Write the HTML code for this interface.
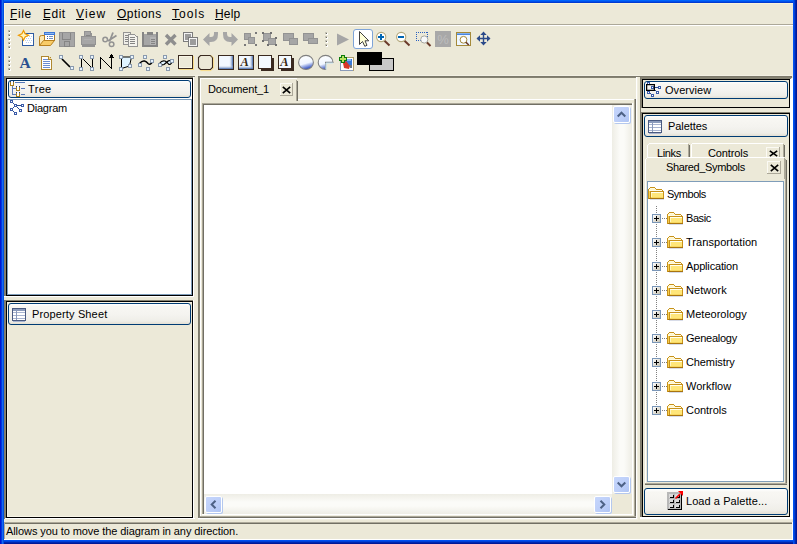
<!DOCTYPE html>
<html><head><meta charset="utf-8"><style>
html,body{margin:0;padding:0;}
body{width:797px;height:544px;position:relative;overflow:hidden;background:#ECE9D8;}
div,span,svg{position:absolute;}
.t{font-family:"Liberation Sans",sans-serif;font-size:11px;line-height:13px;white-space:nowrap;}
</style></head><body>
<div style="left:0px;top:0px;width:797px;height:544px;background:#ECE9D8;"></div>
<div style="left:0px;top:0px;width:797px;height:1px;background:#0064FC;"></div>
<div style="left:0px;top:1px;width:797px;height:1px;background:#0050EA;"></div>
<div style="left:0px;top:2px;width:797px;height:1px;background:#003AD2;"></div>
<div style="left:0px;top:0px;width:1px;height:544px;background:#0016D0;"></div>
<div style="left:1px;top:0px;width:1px;height:544px;background:#0038E0;"></div>
<div style="left:2px;top:0px;width:1px;height:544px;background:#1668F0;"></div>
<div style="left:3px;top:0px;width:1px;height:544px;background:#0050E0;"></div>
<div style="left:793px;top:0px;width:1px;height:544px;background:#0050F0;"></div>
<div style="left:794px;top:0px;width:1px;height:544px;background:#0040D8;"></div>
<div style="left:795px;top:0px;width:1px;height:544px;background:#0028B0;"></div>
<div style="left:796px;top:0px;width:1px;height:544px;background:#001898;"></div>
<div style="left:4px;top:540px;width:789px;height:1px;background:#0050F0;"></div>
<div style="left:4px;top:541px;width:789px;height:1px;background:#0040D8;"></div>
<div style="left:4px;top:542px;width:789px;height:1px;background:#0028B0;"></div>
<div style="left:4px;top:543px;width:789px;height:1px;background:#001898;"></div>
<div style="left:4px;top:3px;width:789px;height:1px;background:#FAF3DC;"></div>
<div style="left:4px;top:3px;width:1px;height:73px;background:#FAF3DC;"></div>
<span class="t" style="left:10px;top:7px;font-size:12px;line-height:14px;letter-spacing:0.619px;color:#000">File</span>
<div style="left:10px;top:19px;width:7px;height:1px;background:#000;"></div>
<span class="t" style="left:43px;top:7px;font-size:12px;line-height:14px;letter-spacing:0.504px;color:#000">Edit</span>
<div style="left:43px;top:19px;width:7px;height:1px;background:#000;"></div>
<span class="t" style="left:76px;top:7px;font-size:12px;line-height:14px;letter-spacing:1.134px;color:#000">View</span>
<div style="left:76px;top:19px;width:8px;height:1px;background:#000;"></div>
<span class="t" style="left:117px;top:7px;font-size:12px;line-height:14px;letter-spacing:0.473px;color:#000">Options</span>
<div style="left:117px;top:19px;width:10px;height:1px;background:#000;"></div>
<span class="t" style="left:172px;top:7px;font-size:12px;line-height:14px;letter-spacing:1.046px;color:#000">Tools</span>
<div style="left:172px;top:19px;width:8px;height:1px;background:#000;"></div>
<span class="t" style="left:215px;top:7px;font-size:12px;line-height:14px;letter-spacing:0.171px;color:#000">Help</span>
<div style="left:215px;top:19px;width:8px;height:1px;background:#000;"></div>
<div style="left:4px;top:24px;width:789px;height:1px;background:#ACA899;"></div>
<div style="left:4px;top:25px;width:789px;height:1px;background:#FFFFFF;"></div>
<div style="left:8px;top:30px;width:2px;height:2px;background:#B8B6A8;"></div>
<div style="left:9px;top:31px;width:1px;height:1px;background:#6E6C62;"></div>
<div style="left:9px;top:32px;width:2px;height:1px;background:#FFFFFF;"></div>
<div style="left:10px;top:31px;width:1px;height:1px;background:#FFFFFF;"></div>
<div style="left:8px;top:34px;width:2px;height:2px;background:#B8B6A8;"></div>
<div style="left:9px;top:35px;width:1px;height:1px;background:#6E6C62;"></div>
<div style="left:9px;top:36px;width:2px;height:1px;background:#FFFFFF;"></div>
<div style="left:10px;top:35px;width:1px;height:1px;background:#FFFFFF;"></div>
<div style="left:8px;top:38px;width:2px;height:2px;background:#B8B6A8;"></div>
<div style="left:9px;top:39px;width:1px;height:1px;background:#6E6C62;"></div>
<div style="left:9px;top:40px;width:2px;height:1px;background:#FFFFFF;"></div>
<div style="left:10px;top:39px;width:1px;height:1px;background:#FFFFFF;"></div>
<div style="left:8px;top:42px;width:2px;height:2px;background:#B8B6A8;"></div>
<div style="left:9px;top:43px;width:1px;height:1px;background:#6E6C62;"></div>
<div style="left:9px;top:44px;width:2px;height:1px;background:#FFFFFF;"></div>
<div style="left:10px;top:43px;width:1px;height:1px;background:#FFFFFF;"></div>
<div style="left:8px;top:46px;width:2px;height:2px;background:#B8B6A8;"></div>
<div style="left:9px;top:47px;width:1px;height:1px;background:#6E6C62;"></div>
<div style="left:9px;top:48px;width:2px;height:1px;background:#FFFFFF;"></div>
<div style="left:10px;top:47px;width:1px;height:1px;background:#FFFFFF;"></div>
<div style="left:8px;top:56px;width:2px;height:2px;background:#B8B6A8;"></div>
<div style="left:9px;top:57px;width:1px;height:1px;background:#6E6C62;"></div>
<div style="left:9px;top:58px;width:2px;height:1px;background:#FFFFFF;"></div>
<div style="left:10px;top:57px;width:1px;height:1px;background:#FFFFFF;"></div>
<div style="left:8px;top:60px;width:2px;height:2px;background:#B8B6A8;"></div>
<div style="left:9px;top:61px;width:1px;height:1px;background:#6E6C62;"></div>
<div style="left:9px;top:62px;width:2px;height:1px;background:#FFFFFF;"></div>
<div style="left:10px;top:61px;width:1px;height:1px;background:#FFFFFF;"></div>
<div style="left:8px;top:64px;width:2px;height:2px;background:#B8B6A8;"></div>
<div style="left:9px;top:65px;width:1px;height:1px;background:#6E6C62;"></div>
<div style="left:9px;top:66px;width:2px;height:1px;background:#FFFFFF;"></div>
<div style="left:10px;top:65px;width:1px;height:1px;background:#FFFFFF;"></div>
<div style="left:8px;top:68px;width:2px;height:2px;background:#B8B6A8;"></div>
<div style="left:9px;top:69px;width:1px;height:1px;background:#6E6C62;"></div>
<div style="left:9px;top:70px;width:2px;height:1px;background:#FFFFFF;"></div>
<div style="left:10px;top:69px;width:1px;height:1px;background:#FFFFFF;"></div>
<div style="left:5px;top:75px;width:788px;height:1px;background:#F3F0E3;"></div>
<div style="left:4px;top:76px;width:191px;height:1px;background:#7D7A6C;"></div>
<div style="left:4px;top:76px;width:1px;height:220px;background:#7D7A6C;"></div>
<div style="left:4px;top:300px;width:1px;height:219px;background:#7D7A6C;"></div>
<div style="left:5px;top:77px;width:189px;height:1px;background:#858272;"></div>
<div style="left:5px;top:77px;width:1px;height:220px;background:#858272;"></div>
<div style="left:6px;top:78px;width:187px;height:1px;background:#000;"></div>
<div style="left:6px;top:295px;width:187px;height:1px;background:#000;"></div>
<div style="left:6px;top:78px;width:1px;height:218px;background:#000;"></div>
<div style="left:192px;top:78px;width:1px;height:218px;background:#000;"></div>
<div style="left:4px;top:296px;width:190px;height:1px;background:#FFFFFF;"></div>
<div style="left:193px;top:77px;width:1px;height:220px;background:#FFFFFF;"></div>
<div style="left:5px;top:300px;width:189px;height:1px;background:#858272;"></div>
<div style="left:5px;top:300px;width:1px;height:219px;background:#858272;"></div>
<div style="left:6px;top:301px;width:187px;height:1px;background:#000;"></div>
<div style="left:6px;top:517px;width:187px;height:1px;background:#000;"></div>
<div style="left:6px;top:301px;width:1px;height:217px;background:#000;"></div>
<div style="left:192px;top:301px;width:1px;height:217px;background:#000;"></div>
<div style="left:7px;top:302px;width:185px;height:1px;background:#F8F5E8;"></div>
<div style="left:7px;top:302px;width:1px;height:215px;background:#F8F5E8;"></div>
<div style="left:7px;top:516px;width:185px;height:1px;background:#F8F5E8;"></div>
<div style="left:5px;top:518px;width:190px;height:1px;background:#FFFFFF;"></div>
<div style="left:193px;top:300px;width:1px;height:219px;background:#FFFFFF;"></div>
<div style="left:7px;top:79px;width:185px;height:216px;background:#FFFFFF;"></div>
<div style="left:191px;top:99px;width:1px;height:196px;background:#7F9DB9;"></div>
<div style="left:7px;top:294px;width:185px;height:1px;background:#7F9DB9;"></div>
<div style="left:7px;top:99px;width:1px;height:196px;background:#7F9DB9;"></div>
<div style="left:7px;top:99px;width:185px;height:1px;background:#7F9DB9;"></div>
<div style="left:8px;top:80px;width:181px;height:16px;background:linear-gradient(#FFFFFF 0%,#F8F7F3 12%,#F4F3EF 55%,#EFEEE8 85%,#E4E0D4 100%);border:1px solid #003C74;border-radius:3px;"></div>
<span class="t" style="left:28px;top:83px;font-size:11px;line-height:13px;letter-spacing:0.327px;color:#000">Tree</span>
<span class="t" style="left:27px;top:102px;font-size:11px;line-height:13px;letter-spacing:-0.230px;color:#000">Diagram</span>
<div style="left:8px;top:303px;width:181px;height:20px;background:linear-gradient(#FFFFFF 0%,#F8F7F3 12%,#F4F3EF 55%,#EFEEE8 85%,#E4E0D4 100%);border:1px solid #003C74;border-radius:3px;"></div>
<span class="t" style="left:32px;top:308px;font-size:11px;line-height:13px;letter-spacing:0.140px;color:#000">Property Sheet</span>
<div style="left:198px;top:76px;width:594px;height:1px;background:#7D7A6C;"></div>
<div style="left:198px;top:76px;width:1px;height:443px;background:#7D7A6C;"></div>
<div style="left:199px;top:77px;width:438px;height:1px;background:#858272;"></div>
<div style="left:199px;top:77px;width:1px;height:442px;background:#858272;"></div>
<div style="left:198px;top:518px;width:440px;height:1px;background:#FFFFFF;"></div>
<div style="left:636px;top:77px;width:1px;height:442px;background:#FFFFFF;"></div>
<div style="left:198px;top:519px;width:440px;height:1px;background:#F1EFE2;"></div>
<div style="left:637px;top:77px;width:1px;height:443px;background:#F1EFE2;"></div>
<div style="left:200px;top:78px;width:1px;height:440px;background:#FFFFFF;"></div>
<div style="left:298px;top:99px;width:338px;height:1px;background:#FFFFFF;"></div>
<div style="left:634px;top:99px;width:1px;height:419px;background:#ACA899;"></div>
<div style="left:635px;top:99px;width:1px;height:419px;background:#716F64;"></div>
<div style="left:200px;top:516px;width:436px;height:1px;background:#ACA899;"></div>
<div style="left:200px;top:517px;width:436px;height:1px;background:#716F64;"></div>
<div style="left:200px;top:78px;width:97px;height:1px;background:#FFFFFF;"></div>
<div style="left:296px;top:80px;width:1px;height:21px;background:#ACA899;"></div>
<div style="left:297px;top:81px;width:1px;height:20px;background:#716F64;"></div>
<span class="t" style="left:208px;top:83px;font-size:11px;line-height:13px;letter-spacing:-0.131px;color:#000">Document_1</span>
<div style="left:280px;top:83px;width:13px;height:1px;background:#FBFAF4;"></div>
<div style="left:280px;top:83px;width:1px;height:13px;background:#FBFAF4;"></div>
<div style="left:280px;top:95px;width:13px;height:1px;background:#ACA899;"></div>
<div style="left:292px;top:83px;width:1px;height:13px;background:#ACA899;"></div>
<svg style="left:282px;top:86px" width="9" height="8" viewBox="0 0 9 8" ><path d="M0.8 0.8 L8.2 7.2 M8.2 0.8 L0.8 7.2" stroke="#000" stroke-width="1.6"/></svg>
<div style="left:202px;top:103px;width:432px;height:1px;background:#ACA899;"></div>
<div style="left:202px;top:103px;width:1px;height:413px;background:#ACA899;"></div>
<div style="left:203px;top:104px;width:431px;height:1px;background:#716F64;"></div>
<div style="left:203px;top:104px;width:1px;height:412px;background:#716F64;"></div>
<div style="left:202px;top:514px;width:432px;height:1px;background:#FFFFFF;"></div>
<div style="left:632px;top:103px;width:1px;height:412px;background:#FFFFFF;"></div>
<div style="left:202px;top:515px;width:432px;height:1px;background:#F1EFE2;"></div>
<div style="left:633px;top:103px;width:1px;height:413px;background:#F1EFE2;"></div>
<div style="left:204px;top:105px;width:428px;height:409px;background:#FFFFFF;"></div>
<div style="left:612px;top:105px;width:20px;height:389px;background:linear-gradient(90deg,#EEEDE5,#FBFBF8 40%,#FBFBF8 60%,#EEEDE5);"></div>
<div style="left:204px;top:494px;width:408px;height:20px;background:linear-gradient(180deg,#EEEDE5,#FBFBF8 40%,#FBFBF8 60%,#EEEDE5);"></div>
<div style="left:612px;top:494px;width:20px;height:20px;background:#ECE9D8;"></div>
<div style="left:613px;top:106px;width:15px;height:15px;background:linear-gradient(135deg,#C6D6FC 0%,#BCCEF8 60%,#AFC4F4 100%);border:1px solid #FFFFFF;border-radius:2px;box-shadow:1px 1px 0 #B4C8EE;"></div>
<svg style="left:0;top:0" width="797" height="544"><path d="M617.7 116.5 L621.5 112.7 L625.3 116.5" fill="none" stroke="#4D6185" stroke-width="2" stroke-linecap="butt" stroke-linejoin="miter"/></svg>
<div style="left:613px;top:476px;width:15px;height:15px;background:linear-gradient(135deg,#C6D6FC 0%,#BCCEF8 60%,#AFC4F4 100%);border:1px solid #FFFFFF;border-radius:2px;box-shadow:1px 1px 0 #B4C8EE;"></div>
<svg style="left:0;top:0" width="797" height="544"><path d="M617.7 482.5 L621.5 486.3 L625.3 482.5" fill="none" stroke="#4D6185" stroke-width="2" stroke-linecap="butt" stroke-linejoin="miter"/></svg>
<div style="left:205px;top:496px;width:15px;height:15px;background:linear-gradient(135deg,#C6D6FC 0%,#BCCEF8 60%,#AFC4F4 100%);border:1px solid #FFFFFF;border-radius:2px;box-shadow:1px 1px 0 #B4C8EE;"></div>
<svg style="left:0;top:0" width="797" height="544"><path d="M215.5 500.7 L211.7 504.5 L215.5 508.3" fill="none" stroke="#4D6185" stroke-width="2" stroke-linecap="butt" stroke-linejoin="miter"/></svg>
<div style="left:594px;top:496px;width:15px;height:15px;background:linear-gradient(135deg,#C6D6FC 0%,#BCCEF8 60%,#AFC4F4 100%);border:1px solid #FFFFFF;border-radius:2px;box-shadow:1px 1px 0 #B4C8EE;"></div>
<svg style="left:0;top:0" width="797" height="544"><path d="M600.5 500.7 L604.3 504.5 L600.5 508.3" fill="none" stroke="#4D6185" stroke-width="2" stroke-linecap="butt" stroke-linejoin="miter"/></svg>
<div style="left:640px;top:76px;width:1px;height:443px;background:#7D7A6C;"></div>
<div style="left:641px;top:77px;width:151px;height:1px;background:#858272;"></div>
<div style="left:641px;top:78px;width:150px;height:1px;background:#858272;"></div>
<div style="left:641px;top:77px;width:1px;height:31px;background:#858272;"></div>
<div style="left:642px;top:79px;width:148px;height:1px;background:#000;"></div>
<div style="left:642px;top:107px;width:148px;height:1px;background:#000;"></div>
<div style="left:642px;top:79px;width:1px;height:29px;background:#000;"></div>
<div style="left:789px;top:79px;width:1px;height:29px;background:#000;"></div>
<div style="left:790px;top:79px;width:3px;height:1px;background:#FFFFFF;"></div>
<div style="left:644px;top:81px;width:142px;height:16px;background:linear-gradient(#FFFFFF 0%,#F8F7F3 12%,#F4F3EF 55%,#EFEEE8 85%,#E4E0D4 100%);border:1px solid #003C74;border-radius:3px;"></div>
<span class="t" style="left:665px;top:84px;font-size:11px;line-height:13px;letter-spacing:0.051px;color:#000">Overview</span>
<div style="left:641px;top:112px;width:150px;height:1px;background:#858272;"></div>
<div style="left:641px;top:112px;width:1px;height:407px;background:#858272;"></div>
<div style="left:642px;top:113px;width:148px;height:1px;background:#000;"></div>
<div style="left:642px;top:516px;width:148px;height:1px;background:#000;"></div>
<div style="left:642px;top:113px;width:1px;height:404px;background:#000;"></div>
<div style="left:789px;top:113px;width:1px;height:404px;background:#000;"></div>
<div style="left:640px;top:518px;width:153px;height:1px;background:#FFFFFF;"></div>
<div style="left:791px;top:79px;width:1px;height:440px;background:#FFFFFF;"></div>
<div style="left:790px;top:79px;width:1px;height:440px;background:#FFFFFF;"></div>
<div style="left:792px;top:78px;width:1px;height:441px;background:#FFFFFF;"></div>
<div style="left:640px;top:517px;width:153px;height:1px;background:#FFFFFF;"></div>
<div style="left:640px;top:519px;width:153px;height:1px;background:#F1EFE2;"></div>
<div style="left:644px;top:115px;width:142px;height:20px;background:linear-gradient(#FFFFFF 0%,#F8F7F3 12%,#F4F3EF 55%,#EFEEE8 85%,#E4E0D4 100%);border:1px solid #003C74;border-radius:3px;"></div>
<span class="t" style="left:668px;top:120px;font-size:11px;line-height:13px;letter-spacing:-0.079px;color:#000">Palettes</span>
<div style="left:647px;top:143px;width:42px;height:14px;background:#ECE9D8;"></div>
<div style="left:649px;top:143px;width:39px;height:1px;background:#FFFFFF;"></div>
<div style="left:647px;top:145px;width:1px;height:12px;background:#FFFFFF;"></div>
<div style="left:648px;top:144px;width:1px;height:1px;background:#FFFFFF;"></div>
<div style="left:688px;top:144px;width:1px;height:13px;background:#ACA899;"></div>
<div style="left:689px;top:145px;width:1px;height:12px;background:#716F64;"></div>
<div style="left:692px;top:143px;width:91px;height:1px;background:#FFFFFF;"></div>
<div style="left:691px;top:144px;width:1px;height:13px;background:#FFFFFF;"></div>
<div style="left:783px;top:144px;width:1px;height:13px;background:#ACA899;"></div>
<div style="left:784px;top:145px;width:1px;height:12px;background:#716F64;"></div>
<span class="t" style="left:657px;top:147px;font-size:11px;line-height:13px;letter-spacing:-0.372px;color:#000">Links</span>
<span class="t" style="left:708px;top:147px;font-size:11px;line-height:13px;letter-spacing:-0.110px;color:#000">Controls</span>
<div style="left:766px;top:147px;width:14px;height:1px;background:#FBFAF4;"></div>
<div style="left:766px;top:147px;width:1px;height:10px;background:#FBFAF4;"></div>
<div style="left:779px;top:147px;width:1px;height:10px;background:#ACA899;"></div>
<svg style="left:769px;top:150px" width="9" height="7" viewBox="0 0 9 7" ><path d="M0.8 0.8 L8.2 6.2 M8.2 0.8 L0.8 6.2" stroke="#000" stroke-width="1.6"/></svg>
<div style="left:647px;top:157px;width:137px;height:1px;background:#FFFFFF;"></div>
<div style="left:645px;top:159px;width:1px;height:326px;background:#FFFFFF;"></div>
<div style="left:646px;top:158px;width:1px;height:1px;background:#FFFFFF;"></div>
<div style="left:784px;top:158px;width:1px;height:21px;background:#ACA899;"></div>
<div style="left:785px;top:159px;width:1px;height:324px;background:#ACA899;"></div>
<div style="left:786px;top:160px;width:1px;height:325px;background:#716F64;"></div>
<div style="left:645px;top:483px;width:142px;height:1px;background:#ACA899;"></div>
<div style="left:645px;top:484px;width:142px;height:1px;background:#716F64;"></div>
<span class="t" style="left:666px;top:161px;font-size:11px;line-height:13px;letter-spacing:-0.352px;color:#000">Shared_Symbols</span>
<div style="left:767px;top:161px;width:14px;height:1px;background:#FBFAF4;"></div>
<div style="left:767px;top:161px;width:1px;height:13px;background:#FBFAF4;"></div>
<div style="left:767px;top:173px;width:14px;height:1px;background:#ACA899;"></div>
<div style="left:780px;top:161px;width:1px;height:13px;background:#ACA899;"></div>
<svg style="left:770px;top:164px" width="9" height="8" viewBox="0 0 9 8" ><path d="M0.8 0.8 L8.2 7.2 M8.2 0.8 L0.8 7.2" stroke="#000" stroke-width="1.6"/></svg>
<div style="left:647px;top:181px;width:137px;height:301px;background:#FFFFFF;box-sizing:border-box;border:1px solid #7F9DB9;"></div>
<span class="t" style="left:667px;top:188px;font-size:11px;line-height:13px;letter-spacing:-0.498px;color:#000">Symbols</span>
<span class="t" style="left:686px;top:212px;font-size:11px;line-height:13px;letter-spacing:-0.427px;color:#000">Basic</span>
<span class="t" style="left:686px;top:236px;font-size:11px;line-height:13px;letter-spacing:0.051px;color:#000">Transportation</span>
<span class="t" style="left:686px;top:260px;font-size:11px;line-height:13px;letter-spacing:-0.163px;color:#000">Application</span>
<span class="t" style="left:686px;top:284px;font-size:11px;line-height:13px;letter-spacing:0.059px;color:#000">Network</span>
<span class="t" style="left:686px;top:308px;font-size:11px;line-height:13px;letter-spacing:0.015px;color:#000">Meteorology</span>
<span class="t" style="left:686px;top:332px;font-size:11px;line-height:13px;letter-spacing:-0.252px;color:#000">Genealogy</span>
<span class="t" style="left:686px;top:356px;font-size:11px;line-height:13px;letter-spacing:-0.102px;color:#000">Chemistry</span>
<span class="t" style="left:686px;top:380px;font-size:11px;line-height:13px;letter-spacing:0.024px;color:#000">Workflow</span>
<span class="t" style="left:686px;top:404px;font-size:11px;line-height:13px;letter-spacing:-0.038px;color:#000">Controls</span>
<div style="left:644px;top:488px;width:142px;height:25px;background:linear-gradient(#FFFFFF 0%,#F8F7F3 12%,#F4F3EF 55%,#EFEEE8 85%,#E4E0D4 100%);border:1px solid #003C74;border-radius:3px;"></div>
<span class="t" style="left:686px;top:495px;font-size:11px;line-height:13px;letter-spacing:0.067px;color:#000">Load a Palette...</span>
<div style="left:4px;top:522px;width:789px;height:1px;background:#ACA899;"></div>
<div style="left:4px;top:522px;width:1px;height:18px;background:#ACA899;"></div>
<div style="left:5px;top:523px;width:787px;height:1px;background:#716F64;"></div>
<span class="t" style="left:6px;top:525px;font-size:11px;line-height:13px;letter-spacing:-0.081px;color:#000">Allows you to move the diagram in any direction.</span>
<div style="left:4px;top:539px;width:789px;height:1px;background:#FFFFFF;"></div>
<div style="left:792px;top:522px;width:1px;height:18px;background:#FFFFFF;"></div>
<svg style="left:0;top:0" width="797" height="544" viewBox="0 0 797 544"><g shape-rendering="crispEdges"><rect x="22" y="33" width="12" height="1" fill="#2D5BA3"/><rect x="22" y="45" width="12" height="1" fill="#2D5BA3"/><rect x="22" y="33" width="1" height="13" fill="#2D5BA3"/><rect x="33" y="33" width="1" height="13" fill="#2D5BA3"/><rect x="23" y="34" width="10" height="11" fill="#FFFFFF"/><rect x="25" y="36" width="1" height="1" fill="#B8D0F0"/><rect x="27" y="36" width="1" height="1" fill="#B8D0F0"/><rect x="29" y="36" width="1" height="1" fill="#B8D0F0"/><rect x="31" y="36" width="1" height="1" fill="#B8D0F0"/><rect x="26" y="38" width="1" height="1" fill="#B8D0F0"/><rect x="28" y="38" width="1" height="1" fill="#B8D0F0"/><rect x="30" y="38" width="1" height="1" fill="#B8D0F0"/><rect x="25" y="40" width="1" height="1" fill="#B8D0F0"/><rect x="27" y="40" width="1" height="1" fill="#B8D0F0"/><rect x="29" y="40" width="1" height="1" fill="#B8D0F0"/><rect x="31" y="40" width="1" height="1" fill="#B8D0F0"/><rect x="26" y="42" width="1" height="1" fill="#B8D0F0"/><rect x="28" y="42" width="1" height="1" fill="#B8D0F0"/><rect x="30" y="42" width="1" height="1" fill="#B8D0F0"/><rect x="44" y="32" width="11" height="1" fill="#A77A2B"/><rect x="44" y="40" width="11" height="1" fill="#A77A2B"/><rect x="44" y="32" width="1" height="9" fill="#A77A2B"/><rect x="54" y="32" width="1" height="9" fill="#A77A2B"/><rect x="45" y="33" width="9" height="7" fill="#FFFFFF"/><rect x="44" y="32" width="11" height="3" fill="#3C78D8"/><rect x="45" y="33" width="9" height="1" fill="#8CB8F0"/><rect x="47" y="36" width="1" height="1" fill="#4060A0"/><rect x="49" y="36" width="4" height="1" fill="#7090C0"/><rect x="47" y="38" width="1" height="1" fill="#4060A0"/><rect x="49" y="38" width="4" height="1" fill="#7090C0"/></g><path d="M39.5 37.5 Q39.5 35.5 41.5 35.5 L44.5 35.5 L44.5 45.5 L39.5 45.5 Z" fill="#FCE7B0" stroke="#B8801E" stroke-width="1" /><path d="M43.5 40.5 L54.5 40.5 L50.5 45.5 L39.5 45.5 Z" fill="#F8CC68" stroke="#B8801E" stroke-width="1" /><path d="M23.5 30.5 L25.1 33.7 L28.5 35.3 L25.1 36.9 L23.5 40.2 L21.9 36.9 L18.5 35.3 L21.9 33.7 Z" fill="#FFF6C0" stroke="#F09A00" stroke-width="1.2" /><g shape-rendering="crispEdges"><rect x="59" y="32" width="16" height="15" fill="#A6A6A6"/><rect x="59" y="32" width="16" height="1" fill="#939393"/><rect x="59" y="46" width="16" height="1" fill="#939393"/><rect x="59" y="32" width="1" height="15" fill="#939393"/><rect x="74" y="32" width="1" height="15" fill="#939393"/><rect x="62" y="33" width="1" height="7" fill="#858585"/><rect x="70" y="33" width="1" height="7" fill="#858585"/><rect x="62" y="39" width="9" height="1" fill="#858585"/><rect x="64" y="41" width="6" height="1" fill="#858585"/><rect x="64" y="46" width="6" height="1" fill="#858585"/><rect x="64" y="41" width="1" height="6" fill="#858585"/><rect x="69" y="41" width="1" height="6" fill="#858585"/><rect x="84" y="31" width="7" height="9" fill="#A6A6A6"/><rect x="84" y="31" width="7" height="1" fill="#939393"/><rect x="84" y="39" width="7" height="1" fill="#939393"/><rect x="84" y="31" width="1" height="9" fill="#939393"/><rect x="90" y="31" width="1" height="9" fill="#939393"/><rect x="91" y="33" width="1" height="6" fill="#939393"/><rect x="86" y="35" width="4" height="1" fill="#858585"/><rect x="86" y="37" width="4" height="1" fill="#858585"/><rect x="81" y="36" width="15" height="9" fill="#A6A6A6"/><rect x="81" y="36" width="15" height="1" fill="#939393"/><rect x="81" y="44" width="15" height="1" fill="#939393"/><rect x="81" y="36" width="1" height="9" fill="#939393"/><rect x="95" y="36" width="1" height="9" fill="#939393"/><rect x="84" y="39" width="8" height="1" fill="#B0B0B0"/><rect x="82" y="44" width="13" height="3" fill="#939393"/></g><path d="M113 32.5 L109.5 41.5 M116.5 35.5 L108 41" fill="none" stroke="#939393" stroke-width="1.8" /><circle cx="105.2" cy="39.5" r="2.3" fill="none" stroke="#939393" stroke-width="1.5"/><circle cx="111.6" cy="44.3" r="2.3" fill="none" stroke="#939393" stroke-width="1.5"/><g shape-rendering="crispEdges"><rect x="123" y="32" width="8" height="13" fill="#EFEEE8"/><rect x="123" y="32" width="8" height="1" fill="#939393"/><rect x="123" y="44" width="8" height="1" fill="#939393"/><rect x="123" y="32" width="1" height="13" fill="#939393"/><rect x="130" y="32" width="1" height="13" fill="#939393"/><rect x="125" y="35" width="4" height="1" fill="#858585"/><rect x="125" y="37" width="4" height="1" fill="#858585"/><rect x="125" y="39" width="4" height="1" fill="#858585"/><rect x="125" y="41" width="4" height="1" fill="#858585"/><rect x="128" y="34" width="10" height="13" fill="#F4F3EE"/><rect x="128" y="34" width="10" height="1" fill="#939393"/><rect x="128" y="46" width="10" height="1" fill="#939393"/><rect x="128" y="34" width="1" height="13" fill="#939393"/><rect x="137" y="34" width="1" height="13" fill="#939393"/><rect x="135" y="34" width="3" height="2" fill="#ECE9D8"/><rect x="135" y="35" width="1" height="1" fill="#939393"/><rect x="136" y="36" width="1" height="1" fill="#939393"/><rect x="130" y="37" width="5" height="1" fill="#858585"/><rect x="130" y="39" width="5" height="1" fill="#858585"/><rect x="130" y="41" width="5" height="1" fill="#858585"/><rect x="130" y="43" width="5" height="1" fill="#858585"/><rect x="142" y="32" width="2" height="15" fill="#858585"/><rect x="156" y="32" width="2" height="15" fill="#858585"/><rect x="142" y="45" width="16" height="2" fill="#858585"/><rect x="144" y="34" width="12" height="11" fill="#A6A6A6"/><rect x="147" y="32" width="6" height="3" fill="#858585"/><rect x="150" y="37" width="6" height="8" fill="#B4B4B4"/><rect x="151" y="39" width="4" height="1" fill="#858585"/><rect x="151" y="41" width="4" height="1" fill="#858585"/><rect x="151" y="43" width="4" height="1" fill="#858585"/></g><path d="M166 35 L175.5 44.5 M175.5 35 L166 44.5" fill="none" stroke="#8E8E8E" stroke-width="3.4" /><g shape-rendering="crispEdges"><rect x="183" y="32" width="10" height="1" fill="#7C7C7C"/><rect x="183" y="41" width="10" height="1" fill="#7C7C7C"/><rect x="183" y="32" width="1" height="10" fill="#7C7C7C"/><rect x="192" y="32" width="1" height="10" fill="#7C7C7C"/><rect x="184" y="33" width="8" height="1" fill="#F4F4F4"/><rect x="184" y="40" width="8" height="1" fill="#F4F4F4"/><rect x="184" y="33" width="1" height="8" fill="#F4F4F4"/><rect x="191" y="33" width="1" height="8" fill="#F4F4F4"/><rect x="185" y="34" width="6" height="6" fill="#9C9C9C"/><rect x="188" y="37" width="10" height="10" fill="#ECE9D8"/><rect x="188" y="37" width="10" height="1" fill="#7C7C7C"/><rect x="188" y="46" width="10" height="1" fill="#7C7C7C"/><rect x="188" y="37" width="1" height="10" fill="#7C7C7C"/><rect x="197" y="37" width="1" height="10" fill="#7C7C7C"/><rect x="189" y="38" width="8" height="1" fill="#F4F4F4"/><rect x="189" y="45" width="8" height="1" fill="#F4F4F4"/><rect x="189" y="38" width="1" height="8" fill="#F4F4F4"/><rect x="196" y="38" width="1" height="8" fill="#F4F4F4"/><rect x="190" y="39" width="6" height="6" fill="#9C9C9C"/></g><path d="M203 39.5 L209.5 33 L209.5 37 L211 37 Q214 37 214 33.5 L214 32 L218 32 L218 34 Q218 42 211 42 L209.5 42 L209.5 46 Z" fill="#A6A6A6"  /><path d="M238 39.5 L231.5 33 L231.5 37 L230 37 Q227 37 227 33.5 L227 32 L223 32 L223 34 Q223 42 230 42 L231.5 42 L231.5 46 Z" fill="#A6A6A6"  /><g shape-rendering="crispEdges"><rect x="244" y="33" width="7" height="7" fill="#A6A6A6"/><rect x="244" y="33" width="7" height="1" fill="#939393"/><rect x="244" y="39" width="7" height="1" fill="#939393"/><rect x="244" y="33" width="1" height="7" fill="#939393"/><rect x="250" y="33" width="1" height="7" fill="#939393"/><rect x="248" y="37" width="7" height="7" fill="#A6A6A6"/><rect x="248" y="37" width="7" height="1" fill="#939393"/><rect x="248" y="43" width="7" height="1" fill="#939393"/><rect x="248" y="37" width="1" height="7" fill="#939393"/><rect x="254" y="37" width="1" height="7" fill="#939393"/><rect x="255" y="32" width="2" height="2" fill="#7A7A7A"/><rect x="244" y="44" width="2" height="2" fill="#7A7A7A"/><rect x="255" y="44" width="2" height="2" fill="#7A7A7A"/><rect x="263" y="33" width="8" height="8" fill="#A6A6A6"/><rect x="263" y="33" width="8" height="1" fill="#939393"/><rect x="263" y="40" width="8" height="1" fill="#939393"/><rect x="263" y="33" width="1" height="8" fill="#939393"/><rect x="270" y="33" width="1" height="8" fill="#939393"/><rect x="268" y="38" width="8" height="7" fill="#A6A6A6"/><rect x="268" y="38" width="8" height="1" fill="#939393"/><rect x="268" y="44" width="8" height="1" fill="#939393"/><rect x="268" y="38" width="1" height="7" fill="#939393"/><rect x="275" y="38" width="1" height="7" fill="#939393"/><rect x="262" y="32" width="2" height="2" fill="#707070"/><rect x="270" y="32" width="2" height="2" fill="#707070"/><rect x="262" y="40" width="2" height="2" fill="#707070"/><rect x="275" y="37" width="2" height="2" fill="#707070"/><rect x="267" y="44" width="2" height="2" fill="#707070"/><rect x="275" y="44" width="2" height="2" fill="#707070"/><rect x="283" y="33" width="11" height="8" fill="#A6A6A6"/><rect x="283" y="33" width="11" height="1" fill="#939393"/><rect x="283" y="40" width="11" height="1" fill="#939393"/><rect x="283" y="33" width="1" height="8" fill="#939393"/><rect x="293" y="33" width="1" height="8" fill="#939393"/><rect x="289" y="38" width="9" height="7" fill="#A6A6A6"/><rect x="289" y="38" width="9" height="1" fill="#939393"/><rect x="289" y="44" width="9" height="1" fill="#939393"/><rect x="289" y="38" width="1" height="7" fill="#939393"/><rect x="297" y="38" width="1" height="7" fill="#939393"/><rect x="303" y="33" width="11" height="8" fill="#A6A6A6"/><rect x="303" y="33" width="11" height="1" fill="#939393"/><rect x="303" y="40" width="11" height="1" fill="#939393"/><rect x="303" y="33" width="1" height="8" fill="#939393"/><rect x="313" y="33" width="1" height="8" fill="#939393"/><rect x="308" y="38" width="10" height="6" fill="#A6A6A6"/><rect x="308" y="38" width="10" height="1" fill="#939393"/><rect x="308" y="43" width="10" height="1" fill="#939393"/><rect x="308" y="38" width="1" height="6" fill="#939393"/><rect x="317" y="38" width="1" height="6" fill="#939393"/><rect x="325" y="32" width="2" height="2" fill="#C4C2B4"/><rect x="326" y="33" width="1" height="1" fill="#6E6C62"/><rect x="326" y="34" width="2" height="1" fill="#FFFFFF"/><rect x="327" y="33" width="1" height="1" fill="#FFFFFF"/><rect x="325" y="36" width="2" height="2" fill="#C4C2B4"/><rect x="326" y="37" width="1" height="1" fill="#6E6C62"/><rect x="326" y="38" width="2" height="1" fill="#FFFFFF"/><rect x="327" y="37" width="1" height="1" fill="#FFFFFF"/><rect x="325" y="40" width="2" height="2" fill="#C4C2B4"/><rect x="326" y="41" width="1" height="1" fill="#6E6C62"/><rect x="326" y="42" width="2" height="1" fill="#FFFFFF"/><rect x="327" y="41" width="1" height="1" fill="#FFFFFF"/><rect x="325" y="44" width="2" height="2" fill="#C4C2B4"/><rect x="326" y="45" width="1" height="1" fill="#6E6C62"/><rect x="326" y="46" width="2" height="1" fill="#FFFFFF"/><rect x="327" y="45" width="1" height="1" fill="#FFFFFF"/></g><path d="M337 33.5 L349 39.5 L337 45.5 Z" fill="#A6A6A6"  /><rect x="353.5" y="29.5" width="19" height="19" rx="2.5" fill="#FFFFFF" stroke="#7EA4D8" stroke-width="1"/><path d="M359.5 31.5 L359.5 44.5 L362.5 41.5 L364.8 46.3 L367 45.3 L365 40.8 L368.8 40.8 Z" fill="#FFFFD8" stroke="#404040" stroke-width="1" stroke-linejoin="miter"/><line x1="384.5" y1="40.8" x2="389.5" y2="45.5" stroke="#6B3A2A" stroke-width="2"/><circle cx="381.2" cy="37" r="4.6" fill="#FFFFFF" stroke="#B4A87C" stroke-width="1.1"/><g shape-rendering="crispEdges"><rect x="378.0" y="36" width="6" height="2" fill="#0066B3"/><rect x="380.0" y="34" width="2" height="6" fill="#0066B3"/></g><line x1="404.5" y1="40.8" x2="409.5" y2="45.5" stroke="#6B3A2A" stroke-width="2"/><circle cx="401.2" cy="37" r="4.6" fill="#FFFFFF" stroke="#B4A87C" stroke-width="1.1"/><g shape-rendering="crispEdges"><rect x="398.0" y="36" width="6" height="2" fill="#0066B3"/></g><g shape-rendering="crispEdges"><rect x="416" y="32" width="1" height="1" fill="#2A60C0"/><rect x="416" y="40" width="1" height="1" fill="#2A60C0"/><rect x="418" y="32" width="1" height="1" fill="#2A60C0"/><rect x="418" y="40" width="1" height="1" fill="#2A60C0"/><rect x="420" y="32" width="1" height="1" fill="#2A60C0"/><rect x="420" y="40" width="1" height="1" fill="#2A60C0"/><rect x="422" y="32" width="1" height="1" fill="#2A60C0"/><rect x="422" y="40" width="1" height="1" fill="#2A60C0"/><rect x="424" y="32" width="1" height="1" fill="#2A60C0"/><rect x="424" y="40" width="1" height="1" fill="#2A60C0"/><rect x="426" y="32" width="1" height="1" fill="#2A60C0"/><rect x="426" y="40" width="1" height="1" fill="#2A60C0"/><rect x="416" y="32" width="1" height="1" fill="#2A60C0"/><rect x="427" y="32" width="1" height="1" fill="#2A60C0"/><rect x="416" y="34" width="1" height="1" fill="#2A60C0"/><rect x="427" y="34" width="1" height="1" fill="#2A60C0"/><rect x="416" y="36" width="1" height="1" fill="#2A60C0"/><rect x="427" y="36" width="1" height="1" fill="#2A60C0"/><rect x="416" y="38" width="1" height="1" fill="#2A60C0"/><rect x="427" y="38" width="1" height="1" fill="#2A60C0"/><rect x="416" y="40" width="1" height="1" fill="#2A60C0"/><rect x="427" y="40" width="1" height="1" fill="#2A60C0"/></g><line x1="426.5" y1="42" x2="430.5" y2="46" stroke="#6B3A2A" stroke-width="2"/><circle cx="424.3" cy="39.5" r="3.6" fill="#F6F8FA" stroke="#A8A8A0" stroke-width="1"/><g shape-rendering="crispEdges"><rect x="435" y="31" width="16" height="16" fill="#A8A8A8"/></g><text x="437.3" y="44" font-family="Liberation Sans" font-size="13" fill="#BDBDBD">%</text><g shape-rendering="crispEdges"><rect x="456" y="32" width="15" height="14" fill="#EEF6FF"/><rect x="456" y="32" width="15" height="1" fill="#A58A3A"/><rect x="456" y="45" width="15" height="1" fill="#A58A3A"/><rect x="456" y="32" width="1" height="14" fill="#A58A3A"/><rect x="470" y="32" width="1" height="14" fill="#A58A3A"/><rect x="457" y="33" width="13" height="2" fill="#4A86E0"/><rect x="457" y="33" width="13" height="1" fill="#80B0F0"/></g><circle cx="463.5" cy="39.8" r="3.4" fill="#FFFFFF" stroke="#A58A3A" stroke-width="1"/><line x1="465.8" y1="42.2" x2="468.8" y2="45" stroke="#6B3A2A" stroke-width="1.6"/><path d="M483.5 33 L483.5 44 M477.5 38.5 L489.5 38.5" fill="none" stroke="#2B4A8A" stroke-width="1.4" /><path d="M483.5 31.5 L480.3 35 L486.7 35 Z M483.5 45.5 L480.3 42 L486.7 42 Z M476.5 38.5 L480 35.3 L480 41.7 Z M490.5 38.5 L487 35.3 L487 41.7 Z" fill="#2B4A8A"  /><text x="19.6" y="68.2" font-family="Liberation Serif" font-size="15.5" font-weight="bold" fill="#2A5090">A</text><g shape-rendering="crispEdges"><rect x="41" y="56" width="11" height="14" fill="#FFFFFF"/><rect x="41" y="56" width="11" height="1" fill="#B08830"/><rect x="41" y="69" width="11" height="1" fill="#B08830"/><rect x="41" y="56" width="1" height="14" fill="#B08830"/><rect x="51" y="56" width="1" height="14" fill="#B08830"/><rect x="49" y="56" width="3" height="3" fill="#ECE9D8"/><rect x="48" y="56" width="1" height="4" fill="#B08830"/><rect x="48" y="59" width="4" height="1" fill="#B08830"/><rect x="49" y="57" width="2" height="2" fill="#F0D890"/><rect x="50" y="57" width="1" height="1" fill="#B08830"/><rect x="43" y="59" width="5" height="1" fill="#6C8CD0"/><rect x="43" y="61" width="7" height="1" fill="#6C8CD0"/><rect x="43" y="63" width="7" height="1" fill="#6C8CD0"/><rect x="43" y="65" width="7" height="1" fill="#6C8CD0"/><rect x="43" y="67" width="7" height="1" fill="#6C8CD0"/></g><line x1="62" y1="59" x2="70" y2="67" stroke="#000" stroke-width="1.7"/><g shape-rendering="crispEdges"><rect x="59" y="55" width="4" height="4" fill="#8A9AAE"/><rect x="60" y="56" width="2" height="2" fill="#E8F4FF"/><rect x="70" y="66" width="4" height="4" fill="#8A9AAE"/><rect x="71" y="67" width="2" height="2" fill="#E8F4FF"/><rect x="81" y="59" width="1" height="8" fill="#000"/><rect x="92" y="59" width="1" height="8" fill="#000"/><rect x="83" y="59" width="1" height="1" fill="#000"/><rect x="84" y="60" width="1" height="1" fill="#000"/><rect x="85" y="61" width="1" height="1" fill="#000"/><rect x="86" y="62" width="1" height="1" fill="#000"/><rect x="87" y="63" width="1" height="1" fill="#000"/><rect x="88" y="64" width="1" height="1" fill="#000"/><rect x="89" y="65" width="1" height="1" fill="#000"/><rect x="90" y="66" width="1" height="1" fill="#000"/><rect x="79" y="55" width="4" height="4" fill="#8A9AAE"/><rect x="80" y="56" width="2" height="2" fill="#E8F4FF"/><rect x="90" y="55" width="4" height="4" fill="#8A9AAE"/><rect x="91" y="56" width="2" height="2" fill="#E8F4FF"/><rect x="79" y="67" width="4" height="4" fill="#8A9AAE"/><rect x="80" y="68" width="2" height="2" fill="#E8F4FF"/><rect x="90" y="67" width="4" height="4" fill="#8A9AAE"/><rect x="91" y="68" width="2" height="2" fill="#E8F4FF"/><rect x="100" y="57" width="1" height="12" fill="#000"/><rect x="111" y="56" width="1" height="13" fill="#000"/><rect x="101" y="58" width="1" height="1" fill="#000"/><rect x="102" y="59" width="1" height="1" fill="#000"/><rect x="103" y="60" width="1" height="1" fill="#000"/><rect x="104" y="61" width="1" height="1" fill="#000"/><rect x="105" y="62" width="1" height="1" fill="#000"/><rect x="106" y="63" width="1" height="1" fill="#000"/><rect x="107" y="64" width="1" height="1" fill="#000"/><rect x="108" y="65" width="1" height="1" fill="#000"/><rect x="109" y="66" width="1" height="1" fill="#000"/><rect x="110" y="67" width="1" height="1" fill="#000"/><rect x="111" y="68" width="1" height="1" fill="#000"/><rect x="110" y="56" width="3" height="1" fill="#000"/><rect x="109" y="57" width="5" height="1" fill="#000"/><rect x="110" y="55" width="3" height="1" fill="#000"/><rect x="111" y="54" width="1" height="1" fill="#000"/></g><path d="M121.5 57 L131.5 57 L129.5 66 L121.5 68.5 Z" fill="#E0F4FF" stroke="#000" stroke-width="1" /><g shape-rendering="crispEdges"><rect x="119" y="55" width="4" height="4" fill="#8A9AAE"/><rect x="120" y="56" width="2" height="2" fill="#E8F4FF"/><rect x="130" y="55" width="4" height="4" fill="#8A9AAE"/><rect x="131" y="56" width="2" height="2" fill="#E8F4FF"/><rect x="128" y="64" width="4" height="4" fill="#8A9AAE"/><rect x="129" y="65" width="2" height="2" fill="#E8F4FF"/><rect x="119" y="67" width="4" height="4" fill="#8A9AAE"/><rect x="120" y="68" width="2" height="2" fill="#E8F4FF"/></g><path d="M139.5 63.5 Q142 60.5 144.5 61 Q146.5 61.5 148 63.5 Q150 65.5 152 62.5" fill="none" stroke="#000" stroke-width="1.4" /><g shape-rendering="crispEdges"><rect x="143" y="55" width="4" height="4" fill="#8A9AAE"/><rect x="144" y="56" width="2" height="2" fill="#E8F4FF"/><rect x="150" y="59" width="4" height="4" fill="#8A9AAE"/><rect x="151" y="60" width="2" height="2" fill="#E8F4FF"/><rect x="138" y="63" width="4" height="4" fill="#8A9AAE"/><rect x="139" y="64" width="2" height="2" fill="#E8F4FF"/><rect x="146" y="67" width="4" height="4" fill="#8A9AAE"/><rect x="147" y="68" width="2" height="2" fill="#E8F4FF"/></g><path d="M159.5 63.5 Q162 60 165 61 Q167 62 168.5 64 Q170 65.5 172 62.5 Q170 59.5 167.5 61.5 Q166 63 164 64.5 Q161.5 65.5 159.5 63.5 Z" fill="#E0F4FF" stroke="#000" stroke-width="1.2" /><g shape-rendering="crispEdges"><rect x="163" y="55" width="4" height="4" fill="#8A9AAE"/><rect x="164" y="56" width="2" height="2" fill="#E8F4FF"/><rect x="170" y="59" width="4" height="4" fill="#8A9AAE"/><rect x="171" y="60" width="2" height="2" fill="#E8F4FF"/><rect x="158" y="63" width="4" height="4" fill="#8A9AAE"/><rect x="159" y="64" width="2" height="2" fill="#E8F4FF"/><rect x="166" y="67" width="4" height="4" fill="#8A9AAE"/><rect x="167" y="68" width="2" height="2" fill="#E8F4FF"/><rect x="179" y="56" width="13" height="12" fill="#F8F5E5"/><rect x="180" y="57" width="11" height="10" fill="#ECE9D8"/><rect x="178" y="55" width="15" height="1" fill="#3A2A20"/><rect x="178" y="68" width="15" height="1" fill="#3A2A20"/><rect x="178" y="55" width="1" height="14" fill="#3A2A20"/><rect x="192" y="55" width="1" height="14" fill="#3A2A20"/><rect x="193" y="56" width="1" height="14" fill="#F8DC88"/><rect x="179" y="69" width="14" height="1" fill="#F8DC88"/></g><path d="M200.5 55.5 L210.5 55.5 L212.5 57.5 L212.5 67.5 L210.5 69.5 L200.5 69.5 L198.5 67.5 L198.5 57.5 Z" fill="#ECE9D8" stroke="#3A2A20" stroke-width="1.1" /><path d="M211 55.3 L213.6 57.9 L213.6 68 L211 70.6 L200.5 70.6" fill="none" stroke="#F8DC88" stroke-width="1" /><defs><linearGradient id="bgh" x1="0" y1="0" x2="1" y2="0"><stop offset="0.7" stop-color="#FFFFFF" stop-opacity="0"/><stop offset="1" stop-color="#3C64A8"/></linearGradient><linearGradient id="bgv" x1="0" y1="0" x2="0" y2="1"><stop offset="0.7" stop-color="#FFFFFF" stop-opacity="0"/><stop offset="1" stop-color="#3C64A8"/></linearGradient><linearGradient id="eg" x1="0.2" y1="0" x2="0.5" y2="1"><stop offset="0" stop-color="#FFFFFF"/><stop offset="0.6" stop-color="#F0F6FF"/><stop offset="1" stop-color="#2848C0"/></linearGradient></defs><g shape-rendering="crispEdges"><rect x="218" y="55" width="16" height="15" fill="#3A2A20"/><rect x="219" y="56" width="14" height="13" fill="#F2F8FF"/></g><rect x="219" y="56" width="14" height="13" fill="url(#bgh)"/><rect x="219" y="56" width="14" height="13" fill="url(#bgv)"/><g shape-rendering="crispEdges"><rect x="238" y="55" width="16" height="15" fill="#3A2A20"/><rect x="239" y="56" width="14" height="13" fill="#F2F8FF"/></g><rect x="239" y="56" width="14" height="13" fill="url(#bgh)"/><rect x="239" y="56" width="14" height="13" fill="url(#bgv)"/><text x="240.5" y="66" font-family="Liberation Serif" font-size="12.5" font-style="italic" font-weight="bold" fill="#3A2A12">A</text><g shape-rendering="crispEdges"><rect x="261" y="58" width="13" height="13" fill="#3A2A20"/><rect x="258" y="55" width="14" height="14" fill="#3A2A20"/><rect x="259" y="56" width="12" height="12" fill="#F4FAFF"/><rect x="281" y="58" width="13" height="13" fill="#3A2A20"/><rect x="278" y="55" width="14" height="14" fill="#3A2A20"/><rect x="279" y="56" width="12" height="12" fill="#F4FAFF"/></g><text x="280.3" y="66" font-family="Liberation Serif" font-size="12.5" font-style="italic" font-weight="bold" fill="#3A2A12">A</text><ellipse cx="306" cy="62.4" rx="7.4" ry="7" fill="url(#eg)" stroke="#808080" stroke-width="1.1"/><path d="M325.6 62.4 L333 62.4 A7.4 7 0 1 0 325.6 69.4 Z" fill="url(#eg)" stroke="#808080" stroke-width="1.1" /><path d="M326 63 L333 63 M326 63 L326 69.5" fill="none" stroke="#C8E8F8" stroke-width="1" /><g shape-rendering="crispEdges"><rect x="340" y="57" width="14" height="14" fill="#8A9AB8"/><rect x="341" y="58" width="12" height="12" fill="#FFFFFF"/><rect x="340" y="57" width="14" height="1" fill="#B0A070"/><rect x="353" y="57" width="1" height="14" fill="#B0A070"/><rect x="345" y="59" width="7" height="7" fill="#3A7AD8"/><rect x="346" y="59" width="5" height="2" fill="#80B0F0"/></g><path d="M343 63 L346 61 L350 66 L349 69 L344 68 Z" fill="#D83828"  /><g shape-rendering="crispEdges"><rect x="350" y="65" width="2" height="3" fill="#707880"/><rect x="341" y="55" width="4" height="8" fill="#0A7A0A"/><rect x="339" y="57" width="8" height="4" fill="#0A7A0A"/><rect x="342" y="56" width="2" height="6" fill="#B8E060"/><rect x="340" y="58" width="6" height="2" fill="#B8E060"/><rect x="369" y="58" width="25" height="13" fill="#000"/><rect x="370" y="59" width="23" height="11" fill="#C8C8C8"/><rect x="357" y="52" width="25" height="13" fill="#000"/></g><g shape-rendering="crispEdges"><rect x="15" y="82" width="10" height="1" fill="#5A7AB8"/><rect x="12" y="86" width="1" height="9" fill="#5A7AB8"/><rect x="13" y="88" width="3" height="1" fill="#5A7AB8"/><rect x="13" y="94" width="3" height="1" fill="#5A7AB8"/><rect x="21" y="88" width="4" height="1" fill="#5A7AB8"/><rect x="21" y="94" width="4" height="1" fill="#5A7AB8"/><rect x="10" y="81" width="4" height="5" fill="#A88020"/><rect x="11" y="81" width="2" height="4" fill="#FFFFFF"/><rect x="10" y="81" width="1" height="1" fill="#1A3A80"/><rect x="13" y="81" width="1" height="1" fill="#1A3A80"/><rect x="16" y="86" width="4" height="5" fill="#A88020"/><rect x="17" y="86" width="2" height="4" fill="#FFFFFF"/><rect x="16" y="86" width="1" height="1" fill="#1A3A80"/><rect x="19" y="86" width="1" height="1" fill="#1A3A80"/><rect x="16" y="92" width="4" height="5" fill="#A88020"/><rect x="17" y="92" width="2" height="4" fill="#FFFFFF"/><rect x="16" y="92" width="1" height="1" fill="#1A3A80"/><rect x="19" y="92" width="1" height="1" fill="#1A3A80"/><rect x="10" y="100" width="3" height="3" fill="#3A5BA8"/><rect x="11" y="101" width="1" height="1" fill="#FFFFFF"/><rect x="14" y="104" width="3" height="3" fill="#3A5BA8"/><rect x="15" y="105" width="1" height="1" fill="#FFFFFF"/><rect x="21" y="104" width="3" height="3" fill="#3A5BA8"/><rect x="22" y="105" width="1" height="1" fill="#FFFFFF"/><rect x="10" y="108" width="3" height="3" fill="#3A5BA8"/><rect x="11" y="109" width="1" height="1" fill="#FFFFFF"/><rect x="19" y="109" width="3" height="3" fill="#3A5BA8"/><rect x="20" y="110" width="1" height="1" fill="#FFFFFF"/><rect x="14" y="112" width="3" height="3" fill="#3A5BA8"/><rect x="15" y="113" width="1" height="1" fill="#FFFFFF"/><rect x="13" y="103" width="1" height="1" fill="#2A4A90"/><rect x="13" y="107" width="1" height="1" fill="#2A4A90"/><rect x="13" y="111" width="1" height="1" fill="#2A4A90"/><rect x="17" y="107" width="1" height="1" fill="#2A4A90"/><rect x="18" y="108" width="1" height="1" fill="#2A4A90"/><rect x="17" y="105" width="4" height="1" fill="#2A4A90"/><rect x="647" y="82" width="3" height="3" fill="#3A5BA8"/><rect x="648" y="83" width="1" height="1" fill="#FFFFFF"/><rect x="651" y="86" width="3" height="3" fill="#3A5BA8"/><rect x="652" y="87" width="1" height="1" fill="#FFFFFF"/><rect x="658" y="86" width="3" height="3" fill="#3A5BA8"/><rect x="659" y="87" width="1" height="1" fill="#FFFFFF"/><rect x="647" y="91" width="3" height="3" fill="#3A5BA8"/><rect x="648" y="92" width="1" height="1" fill="#FFFFFF"/><rect x="656" y="91" width="3" height="3" fill="#3A5BA8"/><rect x="657" y="92" width="1" height="1" fill="#FFFFFF"/><rect x="651" y="94" width="3" height="3" fill="#3A5BA8"/><rect x="652" y="95" width="1" height="1" fill="#FFFFFF"/><rect x="654" y="87" width="4" height="1" fill="#2A4A90"/><rect x="650" y="93" width="1" height="1" fill="#2A4A90"/><rect x="655" y="90" width="1" height="1" fill="#2A4A90"/><rect x="646" y="84" width="9" height="1" fill="#000"/><rect x="646" y="90" width="9" height="1" fill="#000"/><rect x="646" y="84" width="1" height="7" fill="#000"/><rect x="654" y="84" width="1" height="7" fill="#000"/><rect x="647" y="85" width="7" height="1" fill="rgba(0,0,0,0.25)"/><rect x="647" y="89" width="7" height="1" fill="rgba(0,0,0,0.25)"/><rect x="647" y="85" width="1" height="5" fill="rgba(0,0,0,0.25)"/><rect x="653" y="85" width="1" height="5" fill="rgba(0,0,0,0.25)"/><rect x="648" y="120" width="14" height="13" fill="#4A5A80"/><rect x="649" y="121" width="12" height="11" fill="#FFFFFF"/><rect x="649" y="121" width="12" height="2" fill="#8A9ABB"/><rect x="649" y="124" width="12" height="1" fill="#A8B4D0"/><rect x="649" y="127" width="12" height="1" fill="#A8B4D0"/><rect x="649" y="130" width="12" height="1" fill="#A8B4D0"/><rect x="649" y="133" width="12" height="1" fill="#A8B4D0"/><rect x="652" y="123" width="1" height="9" fill="#8A9ABB"/><rect x="12" y="308" width="14" height="13" fill="#4A5A80"/><rect x="13" y="309" width="12" height="11" fill="#FFFFFF"/><rect x="13" y="309" width="12" height="2" fill="#8A9ABB"/><rect x="13" y="312" width="12" height="1" fill="#A8B4D0"/><rect x="13" y="315" width="12" height="1" fill="#A8B4D0"/><rect x="13" y="318" width="12" height="1" fill="#A8B4D0"/><rect x="13" y="321" width="12" height="1" fill="#A8B4D0"/><rect x="16" y="311" width="1" height="9" fill="#8A9ABB"/></g><g shape-rendering="crispEdges"><rect x="650" y="187" width="5" height="1" fill="#C8921A"/><rect x="649" y="188" width="1" height="1" fill="#C8921A"/><rect x="650" y="188" width="5" height="1" fill="#FFFBE0"/><rect x="655" y="188" width="1" height="1" fill="#C8921A"/><rect x="648" y="189" width="1" height="10" fill="#C8921A"/><rect x="649" y="189" width="7" height="1" fill="#FFF6C8"/><rect x="656" y="189" width="6" height="1" fill="#C8921A"/><rect x="649" y="190" width="13" height="1" fill="#FFFBE8"/><rect x="662" y="190" width="1" height="1" fill="#C8921A"/><rect x="649" y="191" width="1" height="8" fill="#F8D050"/><rect x="650" y="191" width="14" height="1" fill="#C8921A"/><rect x="650" y="192" width="1" height="7" fill="#C8921A"/><rect x="663" y="192" width="1" height="7" fill="#C8921A"/><rect x="651" y="192" width="12" height="1" fill="#FFFFF0"/><rect x="651" y="193" width="12" height="5" fill="#FFE67A"/><rect x="651" y="193" width="1" height="5" fill="#FFF6C0"/><rect x="651" y="197" width="12" height="1" fill="#F8D860"/><rect x="649" y="198" width="15" height="1" fill="#A87410"/><rect x="650" y="199" width="14" height="1" fill="#D8DCE8"/></g><g shape-rendering="crispEdges"><rect x="669" y="212" width="5" height="1" fill="#C8921A"/><rect x="668" y="213" width="1" height="1" fill="#C8921A"/><rect x="669" y="213" width="5" height="1" fill="#FFFBE0"/><rect x="674" y="213" width="1" height="1" fill="#C8921A"/><rect x="667" y="214" width="1" height="10" fill="#C8921A"/><rect x="668" y="214" width="7" height="1" fill="#FFF6C8"/><rect x="675" y="214" width="6" height="1" fill="#C8921A"/><rect x="668" y="215" width="13" height="1" fill="#FFFBE8"/><rect x="681" y="215" width="1" height="1" fill="#C8921A"/><rect x="668" y="216" width="1" height="8" fill="#F8D050"/><rect x="669" y="216" width="14" height="1" fill="#C8921A"/><rect x="669" y="217" width="1" height="7" fill="#C8921A"/><rect x="682" y="217" width="1" height="7" fill="#C8921A"/><rect x="670" y="217" width="12" height="1" fill="#FFFFF0"/><rect x="670" y="218" width="12" height="5" fill="#FFE67A"/><rect x="670" y="218" width="1" height="5" fill="#FFF6C0"/><rect x="670" y="222" width="12" height="1" fill="#F8D860"/><rect x="668" y="223" width="15" height="1" fill="#A87410"/><rect x="669" y="224" width="14" height="1" fill="#D8DCE8"/></g><g shape-rendering="crispEdges"><rect x="669" y="236" width="5" height="1" fill="#C8921A"/><rect x="668" y="237" width="1" height="1" fill="#C8921A"/><rect x="669" y="237" width="5" height="1" fill="#FFFBE0"/><rect x="674" y="237" width="1" height="1" fill="#C8921A"/><rect x="667" y="238" width="1" height="10" fill="#C8921A"/><rect x="668" y="238" width="7" height="1" fill="#FFF6C8"/><rect x="675" y="238" width="6" height="1" fill="#C8921A"/><rect x="668" y="239" width="13" height="1" fill="#FFFBE8"/><rect x="681" y="239" width="1" height="1" fill="#C8921A"/><rect x="668" y="240" width="1" height="8" fill="#F8D050"/><rect x="669" y="240" width="14" height="1" fill="#C8921A"/><rect x="669" y="241" width="1" height="7" fill="#C8921A"/><rect x="682" y="241" width="1" height="7" fill="#C8921A"/><rect x="670" y="241" width="12" height="1" fill="#FFFFF0"/><rect x="670" y="242" width="12" height="5" fill="#FFE67A"/><rect x="670" y="242" width="1" height="5" fill="#FFF6C0"/><rect x="670" y="246" width="12" height="1" fill="#F8D860"/><rect x="668" y="247" width="15" height="1" fill="#A87410"/><rect x="669" y="248" width="14" height="1" fill="#D8DCE8"/></g><g shape-rendering="crispEdges"><rect x="669" y="260" width="5" height="1" fill="#C8921A"/><rect x="668" y="261" width="1" height="1" fill="#C8921A"/><rect x="669" y="261" width="5" height="1" fill="#FFFBE0"/><rect x="674" y="261" width="1" height="1" fill="#C8921A"/><rect x="667" y="262" width="1" height="10" fill="#C8921A"/><rect x="668" y="262" width="7" height="1" fill="#FFF6C8"/><rect x="675" y="262" width="6" height="1" fill="#C8921A"/><rect x="668" y="263" width="13" height="1" fill="#FFFBE8"/><rect x="681" y="263" width="1" height="1" fill="#C8921A"/><rect x="668" y="264" width="1" height="8" fill="#F8D050"/><rect x="669" y="264" width="14" height="1" fill="#C8921A"/><rect x="669" y="265" width="1" height="7" fill="#C8921A"/><rect x="682" y="265" width="1" height="7" fill="#C8921A"/><rect x="670" y="265" width="12" height="1" fill="#FFFFF0"/><rect x="670" y="266" width="12" height="5" fill="#FFE67A"/><rect x="670" y="266" width="1" height="5" fill="#FFF6C0"/><rect x="670" y="270" width="12" height="1" fill="#F8D860"/><rect x="668" y="271" width="15" height="1" fill="#A87410"/><rect x="669" y="272" width="14" height="1" fill="#D8DCE8"/></g><g shape-rendering="crispEdges"><rect x="669" y="284" width="5" height="1" fill="#C8921A"/><rect x="668" y="285" width="1" height="1" fill="#C8921A"/><rect x="669" y="285" width="5" height="1" fill="#FFFBE0"/><rect x="674" y="285" width="1" height="1" fill="#C8921A"/><rect x="667" y="286" width="1" height="10" fill="#C8921A"/><rect x="668" y="286" width="7" height="1" fill="#FFF6C8"/><rect x="675" y="286" width="6" height="1" fill="#C8921A"/><rect x="668" y="287" width="13" height="1" fill="#FFFBE8"/><rect x="681" y="287" width="1" height="1" fill="#C8921A"/><rect x="668" y="288" width="1" height="8" fill="#F8D050"/><rect x="669" y="288" width="14" height="1" fill="#C8921A"/><rect x="669" y="289" width="1" height="7" fill="#C8921A"/><rect x="682" y="289" width="1" height="7" fill="#C8921A"/><rect x="670" y="289" width="12" height="1" fill="#FFFFF0"/><rect x="670" y="290" width="12" height="5" fill="#FFE67A"/><rect x="670" y="290" width="1" height="5" fill="#FFF6C0"/><rect x="670" y="294" width="12" height="1" fill="#F8D860"/><rect x="668" y="295" width="15" height="1" fill="#A87410"/><rect x="669" y="296" width="14" height="1" fill="#D8DCE8"/></g><g shape-rendering="crispEdges"><rect x="669" y="308" width="5" height="1" fill="#C8921A"/><rect x="668" y="309" width="1" height="1" fill="#C8921A"/><rect x="669" y="309" width="5" height="1" fill="#FFFBE0"/><rect x="674" y="309" width="1" height="1" fill="#C8921A"/><rect x="667" y="310" width="1" height="10" fill="#C8921A"/><rect x="668" y="310" width="7" height="1" fill="#FFF6C8"/><rect x="675" y="310" width="6" height="1" fill="#C8921A"/><rect x="668" y="311" width="13" height="1" fill="#FFFBE8"/><rect x="681" y="311" width="1" height="1" fill="#C8921A"/><rect x="668" y="312" width="1" height="8" fill="#F8D050"/><rect x="669" y="312" width="14" height="1" fill="#C8921A"/><rect x="669" y="313" width="1" height="7" fill="#C8921A"/><rect x="682" y="313" width="1" height="7" fill="#C8921A"/><rect x="670" y="313" width="12" height="1" fill="#FFFFF0"/><rect x="670" y="314" width="12" height="5" fill="#FFE67A"/><rect x="670" y="314" width="1" height="5" fill="#FFF6C0"/><rect x="670" y="318" width="12" height="1" fill="#F8D860"/><rect x="668" y="319" width="15" height="1" fill="#A87410"/><rect x="669" y="320" width="14" height="1" fill="#D8DCE8"/></g><g shape-rendering="crispEdges"><rect x="669" y="332" width="5" height="1" fill="#C8921A"/><rect x="668" y="333" width="1" height="1" fill="#C8921A"/><rect x="669" y="333" width="5" height="1" fill="#FFFBE0"/><rect x="674" y="333" width="1" height="1" fill="#C8921A"/><rect x="667" y="334" width="1" height="10" fill="#C8921A"/><rect x="668" y="334" width="7" height="1" fill="#FFF6C8"/><rect x="675" y="334" width="6" height="1" fill="#C8921A"/><rect x="668" y="335" width="13" height="1" fill="#FFFBE8"/><rect x="681" y="335" width="1" height="1" fill="#C8921A"/><rect x="668" y="336" width="1" height="8" fill="#F8D050"/><rect x="669" y="336" width="14" height="1" fill="#C8921A"/><rect x="669" y="337" width="1" height="7" fill="#C8921A"/><rect x="682" y="337" width="1" height="7" fill="#C8921A"/><rect x="670" y="337" width="12" height="1" fill="#FFFFF0"/><rect x="670" y="338" width="12" height="5" fill="#FFE67A"/><rect x="670" y="338" width="1" height="5" fill="#FFF6C0"/><rect x="670" y="342" width="12" height="1" fill="#F8D860"/><rect x="668" y="343" width="15" height="1" fill="#A87410"/><rect x="669" y="344" width="14" height="1" fill="#D8DCE8"/></g><g shape-rendering="crispEdges"><rect x="669" y="356" width="5" height="1" fill="#C8921A"/><rect x="668" y="357" width="1" height="1" fill="#C8921A"/><rect x="669" y="357" width="5" height="1" fill="#FFFBE0"/><rect x="674" y="357" width="1" height="1" fill="#C8921A"/><rect x="667" y="358" width="1" height="10" fill="#C8921A"/><rect x="668" y="358" width="7" height="1" fill="#FFF6C8"/><rect x="675" y="358" width="6" height="1" fill="#C8921A"/><rect x="668" y="359" width="13" height="1" fill="#FFFBE8"/><rect x="681" y="359" width="1" height="1" fill="#C8921A"/><rect x="668" y="360" width="1" height="8" fill="#F8D050"/><rect x="669" y="360" width="14" height="1" fill="#C8921A"/><rect x="669" y="361" width="1" height="7" fill="#C8921A"/><rect x="682" y="361" width="1" height="7" fill="#C8921A"/><rect x="670" y="361" width="12" height="1" fill="#FFFFF0"/><rect x="670" y="362" width="12" height="5" fill="#FFE67A"/><rect x="670" y="362" width="1" height="5" fill="#FFF6C0"/><rect x="670" y="366" width="12" height="1" fill="#F8D860"/><rect x="668" y="367" width="15" height="1" fill="#A87410"/><rect x="669" y="368" width="14" height="1" fill="#D8DCE8"/></g><g shape-rendering="crispEdges"><rect x="669" y="380" width="5" height="1" fill="#C8921A"/><rect x="668" y="381" width="1" height="1" fill="#C8921A"/><rect x="669" y="381" width="5" height="1" fill="#FFFBE0"/><rect x="674" y="381" width="1" height="1" fill="#C8921A"/><rect x="667" y="382" width="1" height="10" fill="#C8921A"/><rect x="668" y="382" width="7" height="1" fill="#FFF6C8"/><rect x="675" y="382" width="6" height="1" fill="#C8921A"/><rect x="668" y="383" width="13" height="1" fill="#FFFBE8"/><rect x="681" y="383" width="1" height="1" fill="#C8921A"/><rect x="668" y="384" width="1" height="8" fill="#F8D050"/><rect x="669" y="384" width="14" height="1" fill="#C8921A"/><rect x="669" y="385" width="1" height="7" fill="#C8921A"/><rect x="682" y="385" width="1" height="7" fill="#C8921A"/><rect x="670" y="385" width="12" height="1" fill="#FFFFF0"/><rect x="670" y="386" width="12" height="5" fill="#FFE67A"/><rect x="670" y="386" width="1" height="5" fill="#FFF6C0"/><rect x="670" y="390" width="12" height="1" fill="#F8D860"/><rect x="668" y="391" width="15" height="1" fill="#A87410"/><rect x="669" y="392" width="14" height="1" fill="#D8DCE8"/></g><g shape-rendering="crispEdges"><rect x="669" y="404" width="5" height="1" fill="#C8921A"/><rect x="668" y="405" width="1" height="1" fill="#C8921A"/><rect x="669" y="405" width="5" height="1" fill="#FFFBE0"/><rect x="674" y="405" width="1" height="1" fill="#C8921A"/><rect x="667" y="406" width="1" height="10" fill="#C8921A"/><rect x="668" y="406" width="7" height="1" fill="#FFF6C8"/><rect x="675" y="406" width="6" height="1" fill="#C8921A"/><rect x="668" y="407" width="13" height="1" fill="#FFFBE8"/><rect x="681" y="407" width="1" height="1" fill="#C8921A"/><rect x="668" y="408" width="1" height="8" fill="#F8D050"/><rect x="669" y="408" width="14" height="1" fill="#C8921A"/><rect x="669" y="409" width="1" height="7" fill="#C8921A"/><rect x="682" y="409" width="1" height="7" fill="#C8921A"/><rect x="670" y="409" width="12" height="1" fill="#FFFFF0"/><rect x="670" y="410" width="12" height="5" fill="#FFE67A"/><rect x="670" y="410" width="1" height="5" fill="#FFF6C0"/><rect x="670" y="414" width="12" height="1" fill="#F8D860"/><rect x="668" y="415" width="15" height="1" fill="#A87410"/><rect x="669" y="416" width="14" height="1" fill="#D8DCE8"/></g><g shape-rendering="crispEdges"><rect x="662" y="218" width="1" height="1" fill="#808080"/><rect x="664" y="218" width="1" height="1" fill="#808080"/><rect x="666" y="218" width="1" height="1" fill="#808080"/><rect x="662" y="242" width="1" height="1" fill="#808080"/><rect x="664" y="242" width="1" height="1" fill="#808080"/><rect x="666" y="242" width="1" height="1" fill="#808080"/><rect x="662" y="266" width="1" height="1" fill="#808080"/><rect x="664" y="266" width="1" height="1" fill="#808080"/><rect x="666" y="266" width="1" height="1" fill="#808080"/><rect x="662" y="290" width="1" height="1" fill="#808080"/><rect x="664" y="290" width="1" height="1" fill="#808080"/><rect x="666" y="290" width="1" height="1" fill="#808080"/><rect x="662" y="314" width="1" height="1" fill="#808080"/><rect x="664" y="314" width="1" height="1" fill="#808080"/><rect x="666" y="314" width="1" height="1" fill="#808080"/><rect x="662" y="338" width="1" height="1" fill="#808080"/><rect x="664" y="338" width="1" height="1" fill="#808080"/><rect x="666" y="338" width="1" height="1" fill="#808080"/><rect x="662" y="362" width="1" height="1" fill="#808080"/><rect x="664" y="362" width="1" height="1" fill="#808080"/><rect x="666" y="362" width="1" height="1" fill="#808080"/><rect x="662" y="386" width="1" height="1" fill="#808080"/><rect x="664" y="386" width="1" height="1" fill="#808080"/><rect x="666" y="386" width="1" height="1" fill="#808080"/><rect x="662" y="410" width="1" height="1" fill="#808080"/><rect x="664" y="410" width="1" height="1" fill="#808080"/><rect x="666" y="410" width="1" height="1" fill="#808080"/><rect x="656" y="206" width="1" height="1" fill="#808080"/><rect x="656" y="208" width="1" height="1" fill="#808080"/><rect x="656" y="210" width="1" height="1" fill="#808080"/><rect x="656" y="212" width="1" height="1" fill="#808080"/><rect x="656" y="224" width="1" height="1" fill="#808080"/><rect x="656" y="226" width="1" height="1" fill="#808080"/><rect x="656" y="228" width="1" height="1" fill="#808080"/><rect x="656" y="230" width="1" height="1" fill="#808080"/><rect x="656" y="232" width="1" height="1" fill="#808080"/><rect x="656" y="234" width="1" height="1" fill="#808080"/><rect x="656" y="236" width="1" height="1" fill="#808080"/><rect x="656" y="248" width="1" height="1" fill="#808080"/><rect x="656" y="250" width="1" height="1" fill="#808080"/><rect x="656" y="252" width="1" height="1" fill="#808080"/><rect x="656" y="254" width="1" height="1" fill="#808080"/><rect x="656" y="256" width="1" height="1" fill="#808080"/><rect x="656" y="258" width="1" height="1" fill="#808080"/><rect x="656" y="260" width="1" height="1" fill="#808080"/><rect x="656" y="272" width="1" height="1" fill="#808080"/><rect x="656" y="274" width="1" height="1" fill="#808080"/><rect x="656" y="276" width="1" height="1" fill="#808080"/><rect x="656" y="278" width="1" height="1" fill="#808080"/><rect x="656" y="280" width="1" height="1" fill="#808080"/><rect x="656" y="282" width="1" height="1" fill="#808080"/><rect x="656" y="284" width="1" height="1" fill="#808080"/><rect x="656" y="296" width="1" height="1" fill="#808080"/><rect x="656" y="298" width="1" height="1" fill="#808080"/><rect x="656" y="300" width="1" height="1" fill="#808080"/><rect x="656" y="302" width="1" height="1" fill="#808080"/><rect x="656" y="304" width="1" height="1" fill="#808080"/><rect x="656" y="306" width="1" height="1" fill="#808080"/><rect x="656" y="308" width="1" height="1" fill="#808080"/><rect x="656" y="320" width="1" height="1" fill="#808080"/><rect x="656" y="322" width="1" height="1" fill="#808080"/><rect x="656" y="324" width="1" height="1" fill="#808080"/><rect x="656" y="326" width="1" height="1" fill="#808080"/><rect x="656" y="328" width="1" height="1" fill="#808080"/><rect x="656" y="330" width="1" height="1" fill="#808080"/><rect x="656" y="332" width="1" height="1" fill="#808080"/><rect x="656" y="344" width="1" height="1" fill="#808080"/><rect x="656" y="346" width="1" height="1" fill="#808080"/><rect x="656" y="348" width="1" height="1" fill="#808080"/><rect x="656" y="350" width="1" height="1" fill="#808080"/><rect x="656" y="352" width="1" height="1" fill="#808080"/><rect x="656" y="354" width="1" height="1" fill="#808080"/><rect x="656" y="356" width="1" height="1" fill="#808080"/><rect x="656" y="368" width="1" height="1" fill="#808080"/><rect x="656" y="370" width="1" height="1" fill="#808080"/><rect x="656" y="372" width="1" height="1" fill="#808080"/><rect x="656" y="374" width="1" height="1" fill="#808080"/><rect x="656" y="376" width="1" height="1" fill="#808080"/><rect x="656" y="378" width="1" height="1" fill="#808080"/><rect x="656" y="380" width="1" height="1" fill="#808080"/><rect x="656" y="392" width="1" height="1" fill="#808080"/><rect x="656" y="394" width="1" height="1" fill="#808080"/><rect x="656" y="396" width="1" height="1" fill="#808080"/><rect x="656" y="398" width="1" height="1" fill="#808080"/><rect x="656" y="400" width="1" height="1" fill="#808080"/><rect x="656" y="402" width="1" height="1" fill="#808080"/><rect x="656" y="404" width="1" height="1" fill="#808080"/></g><defs><linearGradient id="eb" x1="0" y1="0" x2="1" y2="1"><stop offset="0" stop-color="#FFFFFF"/><stop offset="1" stop-color="#C8C4B4"/></linearGradient></defs><g shape-rendering="crispEdges"><rect x="652" y="214" width="9" height="9" fill="#7A96B8"/><rect x="653" y="215" width="7" height="7" fill="url(#eb)"/><rect x="654" y="218" width="5" height="1" fill="#000"/><rect x="656" y="216" width="1" height="5" fill="#000"/><rect x="652" y="238" width="9" height="9" fill="#7A96B8"/><rect x="653" y="239" width="7" height="7" fill="url(#eb)"/><rect x="654" y="242" width="5" height="1" fill="#000"/><rect x="656" y="240" width="1" height="5" fill="#000"/><rect x="652" y="262" width="9" height="9" fill="#7A96B8"/><rect x="653" y="263" width="7" height="7" fill="url(#eb)"/><rect x="654" y="266" width="5" height="1" fill="#000"/><rect x="656" y="264" width="1" height="5" fill="#000"/><rect x="652" y="286" width="9" height="9" fill="#7A96B8"/><rect x="653" y="287" width="7" height="7" fill="url(#eb)"/><rect x="654" y="290" width="5" height="1" fill="#000"/><rect x="656" y="288" width="1" height="5" fill="#000"/><rect x="652" y="310" width="9" height="9" fill="#7A96B8"/><rect x="653" y="311" width="7" height="7" fill="url(#eb)"/><rect x="654" y="314" width="5" height="1" fill="#000"/><rect x="656" y="312" width="1" height="5" fill="#000"/><rect x="652" y="334" width="9" height="9" fill="#7A96B8"/><rect x="653" y="335" width="7" height="7" fill="url(#eb)"/><rect x="654" y="338" width="5" height="1" fill="#000"/><rect x="656" y="336" width="1" height="5" fill="#000"/><rect x="652" y="358" width="9" height="9" fill="#7A96B8"/><rect x="653" y="359" width="7" height="7" fill="url(#eb)"/><rect x="654" y="362" width="5" height="1" fill="#000"/><rect x="656" y="360" width="1" height="5" fill="#000"/><rect x="652" y="382" width="9" height="9" fill="#7A96B8"/><rect x="653" y="383" width="7" height="7" fill="url(#eb)"/><rect x="654" y="386" width="5" height="1" fill="#000"/><rect x="656" y="384" width="1" height="5" fill="#000"/><rect x="652" y="406" width="9" height="9" fill="#7A96B8"/><rect x="653" y="407" width="7" height="7" fill="url(#eb)"/><rect x="654" y="410" width="5" height="1" fill="#000"/><rect x="656" y="408" width="1" height="5" fill="#000"/><rect x="667" y="492" width="14" height="18" fill="#B8B8B8"/><rect x="668" y="509" width="14" height="1" fill="#000"/><rect x="681" y="494" width="1" height="16" fill="#000"/><rect x="669" y="494" width="4" height="4" fill="#D8D8D8"/><rect x="670" y="497" width="4" height="1" fill="#000"/><rect x="673" y="495" width="1" height="3" fill="#000"/><rect x="675" y="494" width="4" height="4" fill="#D8D8D8"/><rect x="676" y="497" width="4" height="1" fill="#000"/><rect x="679" y="495" width="1" height="3" fill="#000"/><rect x="669" y="499" width="4" height="4" fill="#D8D8D8"/><rect x="670" y="502" width="4" height="1" fill="#000"/><rect x="673" y="500" width="1" height="3" fill="#000"/><rect x="675" y="499" width="4" height="4" fill="#D8D8D8"/><rect x="676" y="502" width="4" height="1" fill="#000"/><rect x="679" y="500" width="1" height="3" fill="#000"/><rect x="669" y="504" width="4" height="4" fill="#D8D8D8"/><rect x="670" y="507" width="4" height="1" fill="#000"/><rect x="673" y="505" width="1" height="3" fill="#000"/><rect x="675" y="504" width="4" height="4" fill="#D8D8D8"/><rect x="676" y="507" width="4" height="1" fill="#000"/><rect x="679" y="505" width="1" height="3" fill="#000"/></g><path d="M675.5 498.5 L680 494" fill="none" stroke="#FF0000" stroke-width="1.6" /><path d="M678 491 L683 491 L683 496 Z" fill="#FF0000"  /></svg>
</body></html>
